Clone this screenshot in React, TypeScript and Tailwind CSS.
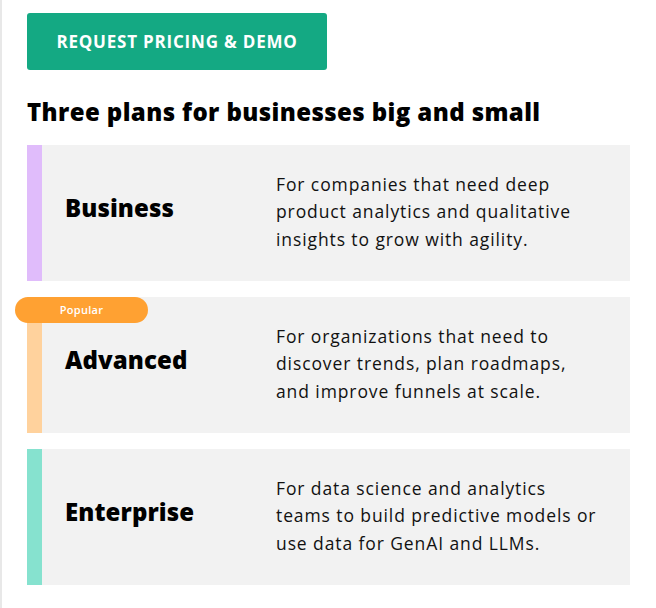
import React from "react";

const plans = [
  {
    name: "Business",
    stripe: "bg-[#e0bcfb]",
    lines: ["For companies that need deep", "product analytics and qualitative", "insights to grow with agility."],
    popular: false,
  },
  {
    name: "Advanced",
    stripe: "bg-[#ffd29d]",
    lines: ["For organizations that need to", "discover trends, plan roadmaps,", "and improve funnels at scale."],
    popular: true,
  },
  {
    name: "Enterprise",
    stripe: "bg-[#86e2cf]",
    lines: ["For data science and analytics", "teams to build predictive models or", "use data for GenAI and LLMs."],
    popular: false,
  },
];

export default function App() {
  return (
    <div
      className="w-[656px] h-[608px] bg-white border-l-2 border-[#e8e8e8] pl-[25px] pt-[13px]"
      style={{ fontFamily: "'Open Sans', 'Noto Sans', sans-serif" }}
    >
      <button className="w-[300px] h-[57px] rounded-[3px] bg-[#14a983] text-white font-bold text-[17px] tracking-[0.8px] flex items-center justify-center">
        REQUEST PRICING &amp; DEMO
      </button>
      <h2 className="mt-[26px] text-[24px] leading-[32px] font-extrabold tracking-[0.4px] text-black">
        Three plans for businesses big and small
      </h2>
      <div className="mt-[17px] flex flex-col gap-4 w-[603px]">
        {plans.map((p) => (
          <div key={p.name} className="relative flex h-[136px] bg-[#f2f2f2]">
            <div className={`w-[15px] shrink-0 ${p.stripe}`} />
            <div className="flex items-center w-[234px] pl-[23px] pb-[11px]">
              <span className="text-[24px] font-extrabold tracking-[0.1px] text-black">{p.name}</span>
            </div>
            <div className="flex items-center flex-1 pb-[2px]">
              <p className="text-[17.5px] leading-[27.5px] tracking-[0.9px] text-[#111] whitespace-nowrap">
                {p.lines.map((l, i) => (
                  <React.Fragment key={i}>
                    {l}
                    {i < p.lines.length - 1 && <br />}
                  </React.Fragment>
                ))}
              </p>
            </div>
            {p.popular && (
              <div className="absolute left-[-12px] top-0 w-[133px] h-[26px] rounded-full bg-[#ffa132] flex items-center justify-center text-white text-[11px] font-semibold tracking-[0.3px]">
                Popular
              </div>
            )}
          </div>
        ))}
      </div>
    </div>
  );
}
